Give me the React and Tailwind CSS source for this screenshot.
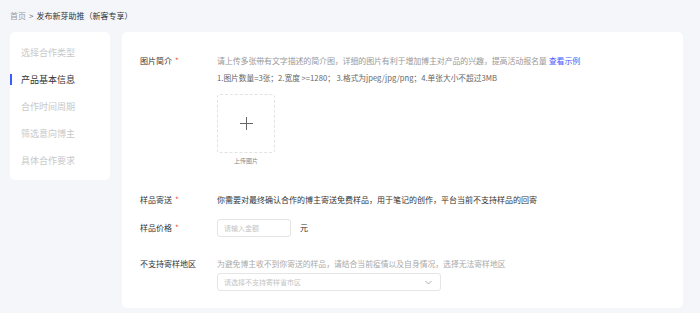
import React from "react";

const font = { fontFamily: '"Noto Sans CJK SC", "Noto Sans", sans-serif' };

function Star() {
  return <span className="ml-[3px] text-[#f5483b] text-[8px]">*</span>;
}

export default function App() {
  const items = ["选择合作类型", "产品基本信息", "合作时间周期", "筛选意向博主", "具体合作要求"];
  return (
    <div style={font} className="w-[700px] h-[313px] bg-[#f5f6fa] overflow-hidden">
      <div className="h-[32px] pl-[10px] pt-[10px] text-[8px] leading-[12px] text-[#333] flex items-start">
        <span className="text-[#999]">首页</span>
        <span className="mx-[3px] text-[#666]">&gt;</span>
        <span>发布新芽助推（新客专享）</span>
      </div>
      <div className="flex items-start pl-[10px] gap-[12px]">
        <div className="w-[100px] h-[148px] bg-white rounded-[5px] pt-[7px]">
          {items.map((t, i) => (
            <div key={t} className="relative h-[27px] flex items-center pl-[11px] text-[9px]">
              {i === 1 && <div className="absolute left-0 top-[8px] w-[2px] h-[11px] bg-[#3d5cff]" />}
              <span className={i === 1 ? "text-[#333]" : "text-[#c8c8c8]"}>{t}</span>
            </div>
          ))}
        </div>
        <div className="w-[561px] h-[276px] bg-white rounded-[5px] pl-[18px] pt-[22px]">
          <div className="flex">
            <div className="w-[77px] text-[8px] leading-[12px] text-[#333] pt-[1px]">
              图片简介<Star />
            </div>
            <div className="flex flex-col">
              <div className="text-[8px] leading-[12px] text-[#999] pt-[1px] tracking-[-0.15px]">
                请上传多张带有文字描述的简介图，详细的图片有利于增加博主对产品的兴趣，提高活动报名量
                <span className="ml-[2px] text-[#3d5cff]">查看示例</span>
              </div>
              <div className="text-[7.7px] leading-[12px] text-[#666] mt-[5px]">
                1.图片数量=3张；2.宽度 &gt;=1280； 3.格式为jpeg/jpg/png；4.单张大小不超过3MB
              </div>
              <div className="mt-[10px] w-[58px] flex flex-col items-center">
                <div className="w-[58px] h-[59px] border border-dashed border-[#e3e3e3] rounded-[3px] flex items-center justify-center">
                  <svg width="13" height="13" viewBox="0 0 13 13">
                    <path d="M6.5 0v13M0 6.5h13" stroke="#666" strokeWidth="1" />
                  </svg>
                </div>
                <div className="text-[6px] leading-[8px] text-[#888] mt-[4px]">上传图片</div>
              </div>
            </div>
          </div>
          <div className="flex mt-[29px] text-[8px] leading-[12px]">
            <div className="w-[77px] text-[#333]">
              样品寄送<Star />
            </div>
            <div className="text-[#333]">你需要对最终确认合作的博主寄送免费样品，用于笔记的创作，平台当前不支持样品的回寄</div>
          </div>
          <div className="flex items-center mt-[13px] text-[8px]">
            <div className="w-[77px] text-[#333]">
              样品价格<Star />
            </div>
            <div className="w-[74px] h-[18px] border border-[#e5e5e5] rounded-[3px] flex items-center pl-[6px] text-[#c4c4c4] text-[7px]">
              请输入金额
            </div>
            <span className="ml-[9px] text-[#333]">元</span>
          </div>
          <div className="flex mt-[21px] text-[8px] leading-[12px]">
            <div className="w-[77px] text-[#333]">不支持寄样地区</div>
            <div className="flex flex-col">
              <div className="text-[#aaa] text-[7.8px]">为避免博主收不到你寄送的样品，请结合当前疫情以及自身情况，选择无法寄样地区</div>
              <div className="mt-[3px] w-[224px] h-[18px] border border-[#e5e5e5] rounded-[3px] flex items-center justify-between pl-[6px] pr-[8px] text-[#c4c4c4] text-[7px]">
                <span>请选择不支持寄样省市区</span>
                <svg width="7" height="5" viewBox="0 0 7 5">
                  <path d="M0.5 1l3 3 3-3" stroke="#999" strokeWidth="0.8" fill="none" />
                </svg>
              </div>
            </div>
          </div>
        </div>
      </div>
    </div>
  );
}
